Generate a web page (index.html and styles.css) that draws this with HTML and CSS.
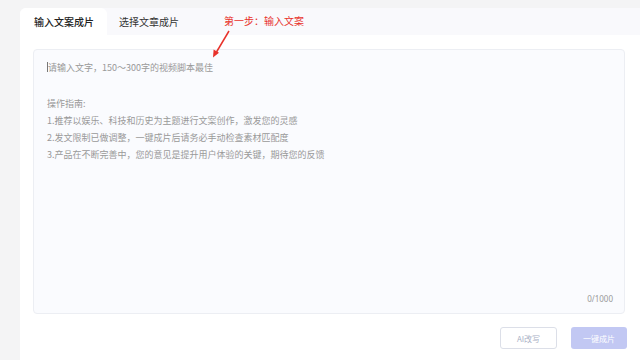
FILE: index.html
```html
<!DOCTYPE html>
<html>
<head>
<meta charset="utf-8">
<link rel="stylesheet" href="styles.css">
</head>
<body>
<div class="card">
  <div class="tabs">
    <div class="tab active">输入文案成片</div>
    <div class="tab">选择文章成片</div>
    <div class="note">第一步：输入文案</div>
    <svg class="arrow" width="26" height="32" viewBox="0 0 26 32">
      <line x1="21" y1="3" x2="8.5" y2="24" stroke="#e8322b" stroke-width="1.5"/>
      <polygon points="5,29.5 5.6,21.5 11,24.8" fill="#e8322b"/>
    </svg>
  </div>
  <div class="body">
    <div class="editor">
      <div class="placeholder">
        <div class="line"><span class="caret"></span>请输入文字，150～300字的视频脚本最佳</div>
        <div class="gap"></div>
        <div class="line">操作指南:</div>
        <div class="line">1.推荐以娱乐、科技和历史为主题进行文案创作，激发您的灵感</div>
        <div class="line">2.发文限制已做调整，一键成片后请务必手动检查素材匹配度</div>
        <div class="line">3.产品在不断完善中，您的意见是提升用户体验的关键，期待您的反馈</div>
      </div>
      <div class="count">0/1000</div>
    </div>
    <div class="actions">
      <button class="btn ghost">AI改写</button>
      <button class="btn primary">一键成片</button>
    </div>
  </div>
</div>
</body>
</html>
```

FILE: styles.css
```css
* { box-sizing: border-box; }
html, body { margin: 0; padding: 0; }
body {
  width: 640px;
  height: 360px;
  overflow: hidden;
  background: #f4f4f5;
  font-family: "Noto Sans CJK SC", "Noto Sans", sans-serif;
  padding: 8px 0 0 20px;
}
.card {
  background: #fff;
  height: 352px;
  border-top-left-radius: 6px;
  display: flex;
  flex-direction: column;
}
.tabs {
  position: relative;
  z-index: 2;
  height: 27px;
  background: #f9f9fc;
  display: flex;
  align-items: stretch;
  border-top-left-radius: 6px;
}
.tab {
  font-size: 10px;
  color: #222;
  display: flex;
  align-items: center;
  padding: 0 12px 0 14px;
  line-height: 1;
  white-space: nowrap;
}
.tab.active {
  background: #fff;
  font-weight: 500;
  width: 87px;
  border-top-left-radius: 6px;
  border-top-right-radius: 6px;
}
.tab + .tab { padding-left: 12px; color: #333; }
.note {
  position: absolute;
  left: 204px;
  top: 6px;
  font-size: 10px;
  color: #e8322b;
  line-height: 14px;
}
.arrow {
  position: absolute;
  left: 188px;
  top: 20px;
  z-index: 3;
}
.body {
  flex: 1;
  padding: 14px 13px 0 13px;
  display: flex;
  flex-direction: column;
}
.editor {
  height: 265px;
  width: 592px;
  background: #fafbfe;
  border: 1px solid #eceef3;
  border-radius: 4px;
  position: relative;
  padding: 9px 13px;
}
.placeholder {
  font-size: 9px;
  color: #999;
  line-height: 17px;
}
.line { height: 17px; white-space: nowrap; }
.gap { height: 19px; }
.caret {
  display: inline-block;
  width: 1px;
  height: 10px;
  background: #777;
  vertical-align: -1px;
}
.count {
  position: absolute;
  right: 11px;
  bottom: 9px;
  font-size: 8px;
  color: #999;
  font-family: "Noto Sans", sans-serif;
}
.actions {
  display: flex;
  justify-content: flex-end;
  gap: 14px;
  margin-top: 13px;
}
.btn {
  height: 22px;
  border-radius: 3px;
  font-size: 8px;
  font-family: "Noto Sans CJK SC", "Noto Sans", sans-serif;
  padding: 0;
}
.btn.ghost {
  width: 57px;
  background: #fff;
  border: 1px solid #dcdfe8;
  color: #aab1c6;
}
.btn.primary {
  width: 56px;
  background: #c2c8f3;
  border: none;
  color: #fff;
}
```
